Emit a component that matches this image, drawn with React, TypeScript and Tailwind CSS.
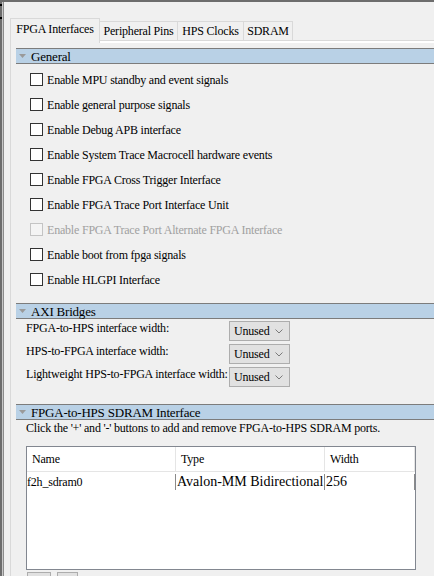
import React from "react";

const options = [
  { label: "Enable MPU standby and event signals" },
  { label: "Enable general purpose signals" },
  { label: "Enable Debug APB interface" },
  { label: "Enable System Trace Macrocell hardware events" },
  { label: "Enable FPGA Cross Trigger Interface" },
  { label: "Enable FPGA Trace Port Interface Unit" },
  { label: "Enable FPGA Trace Port Alternate FPGA Interface", disabled: true },
  { label: "Enable boot from fpga signals" },
  { label: "Enable HLGPI Interface" },
];

const bridges = [
  "FPGA-to-HPS interface width:",
  "HPS-to-FPGA interface width:",
  "Lightweight HPS-to-FPGA interface width:",
];

function SectionHeader({ title }: { title: string }) {
  return (
    <div className="flex h-[16px] items-center border-y border-[#7c7c7c] bg-[#b9d1e6] pl-[3px]">
      <svg width="7" height="4" viewBox="0 0 7 4">
        <path d="M0 0H7L3.5 4Z" fill="#9a9a9a" />
      </svg>
      <span className="ml-[5px] text-[13px] leading-none">{title}</span>
    </div>
  );
}

function Dropdown() {
  return (
    <div className="flex h-[20px] w-[61px] items-center justify-between border border-[#adadad] bg-[#e1e1e1] pl-[4px] pr-[6px] text-[12px] leading-none">
      <span>Unused</span>
      <svg width="8" height="5" viewBox="0 0 8 5">
        <path d="M0.5 0.5L4 4L7.5 0.5" fill="none" stroke="#7a7a7a" strokeWidth="1" />
      </svg>
    </div>
  );
}

export default function App() {
  return (
    <div className="h-[576px] w-[434px] overflow-hidden bg-[#f0f0f0] font-['Liberation_Serif','Times_New_Roman',serif] tracking-[-0.2px] text-black">
      <div className="h-[2px] bg-[#6d6d6d]" />
      <div className="flex h-[574px]">
        <div className="flex w-[2px] flex-col bg-[#6d6d6d]">
          <div className="mt-[2px] h-[2px] bg-black" />
          <div className="mt-[11px] h-[2px] bg-black" />
        </div>
        <div className="w-px bg-[#c8c8c8]" />
        <div className="w-px bg-[#8c8c8c]" />
        <div className="flex min-w-0 flex-1 flex-col pl-[6px] pt-[16px]">
          {/* tabs */}
          <div className="flex h-[22px] items-end text-[12px] leading-[14px]">
            <div className="relative z-10 -mb-[3px] flex h-[25px] w-[90px] justify-center border-x border-t border-[#d9d9d9] bg-[#f0f0f0] pt-[3px]">
              FPGA Interfaces
            </div>
            <div className="-ml-px flex h-[19px] w-[79px] justify-center border-x border-t border-[#d9d9d9] bg-[#f0f0f0] pt-[2px]">
              Peripheral Pins
            </div>
            <div className="-ml-px flex h-[19px] w-[67px] justify-center border-x border-t border-[#d9d9d9] bg-[#f0f0f0] pt-[2px]">
              HPS Clocks
            </div>
            <div className="-ml-px flex h-[19px] w-[50px] justify-center border-x border-t border-[#d9d9d9] bg-[#f0f0f0] pt-[2px]">
              SDRAM
            </div>
          </div>

          {/* pane */}
          <div className="flex-1 border-l border-t border-[#d9d9d9]">
            <div className="h-full border-t-2 border-white pl-[5px] pt-[5px]">
              <SectionHeader title="General" />
              <div className="mt-[3px]">
                {options.map((o) => (
                  <div key={o.label} className="flex h-[25px] items-center pl-[14px]">
                    <span
                      className={`h-[13px] w-[13px] border ${
                        o.disabled ? "border-[#c4c4c4] bg-[#f4f4f4]" : "border-[#333333] bg-white"
                      }`}
                    />
                    <span className={`ml-[4px] text-[12px] leading-[14px] ${o.disabled ? "text-[#a0a0a0]" : ""}`}>
                      {o.label}
                    </span>
                  </div>
                ))}
              </div>

              <div className="mt-[11px]">
                <SectionHeader title="AXI Bridges" />
              </div>
              <div className="mt-[2px] grid grid-cols-[203px_61px] gap-y-[3px] pl-[10px] text-[12px] leading-[14px]">
                {bridges.map((b) => (
                  <React.Fragment key={b}>
                    <span className="whitespace-nowrap">{b}</span>
                    <Dropdown />
                  </React.Fragment>
                ))}
              </div>

              <div className="mt-[17px]">
                <SectionHeader title="FPGA-to-HPS SDRAM Interface" />
              </div>
              <div className="mt-[1px] whitespace-nowrap pl-[10px] text-[12px] leading-[14px]">
                Click the '+' and '-' buttons to add and remove FPGA-to-HPS SDRAM ports.
              </div>

              <div className="ml-[10px] mt-[11px] h-[124px] w-[390px] border border-[#828790] bg-white">
                <div className="flex h-[25px] border-b border-[#e5e5e5] text-[12px] leading-[14px]">
                  <div className="flex w-[149px] items-center border-r border-[#e5e5e5] pl-[5px]">Name</div>
                  <div className="flex w-[149px] items-center border-r border-[#e5e5e5] pl-[5px]">Type</div>
                  <div className="flex w-[90px] items-center border-r border-[#e5e5e5] pl-[5px]">Width</div>
                </div>
                <div className="flex h-[20px] items-center">
                  <div className="w-[148px] text-[12px] leading-[14px]">f2h_sdram0</div>
                  <div className="h-[16px] w-px bg-[#8a8a8a]" />
                  <div className="w-[148px] whitespace-nowrap pl-[1px] text-[14px] leading-[16px] tracking-normal">
                    Avalon-MM Bidirectional
                  </div>
                  <div className="h-[16px] w-px bg-[#8a8a8a]" />
                  <div className="w-[89px] pl-[1px] text-[14px] leading-[16px] tracking-normal">256</div>
                  <div className="h-[16px] w-px bg-[#8a8a8a]" />
                </div>
              </div>

              <div className="ml-[11px] mt-[2px] flex gap-[6px]">
                <div className="h-[22px] w-[24px] border border-[#adadad] bg-[#e1e1e1]" />
                <div className="h-[22px] w-[21px] border border-[#adadad] bg-[#e1e1e1]" />
              </div>
            </div>
          </div>
        </div>
      </div>
    </div>
  );
}
